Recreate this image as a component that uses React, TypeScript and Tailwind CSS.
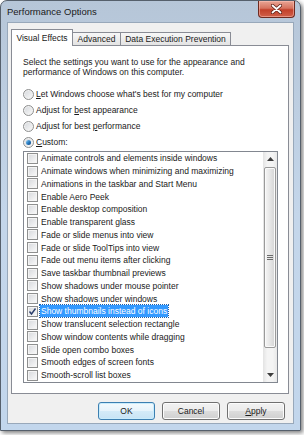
import type { FC, ReactNode } from 'react';

const effects = [
  'Animate controls and elements inside windows',
  'Animate windows when minimizing and maximizing',
  'Animations in the taskbar and Start Menu',
  'Enable Aero Peek',
  'Enable desktop composition',
  'Enable transparent glass',
  'Fade or slide menus into view',
  'Fade or slide ToolTips into view',
  'Fade out menu items after clicking',
  'Save taskbar thumbnail previews',
  'Show shadows under mouse pointer',
  'Show shadows under windows',
  'Show thumbnails instead of icons',
  'Show translucent selection rectangle',
  'Show window contents while dragging',
  'Slide open combo boxes',
  'Smooth edges of screen fonts',
  'Smooth-scroll list boxes',
];

const Radio: FC<{ checked?: boolean; children: ReactNode }> = ({ checked, children }) => (
  <div className="h-[16px] flex items-center gap-[2px]">
    <span className="w-[11px] h-[11px] rounded-full border border-[#8e8f8f] bg-linear-to-br from-[#d3d6da] to-[#fbfbfb] shadow-[inset_0_0_0_1px_#f2f2f2] flex items-center justify-center shrink-0">
      {checked && (
        <span className="w-[5px] h-[5px] rounded-full bg-linear-to-br from-[#8fd0f5] via-[#2a7fc4] to-[#0d3f7a]" />
      )}
    </span>
    <span>{children}</span>
  </div>
);

const CheckBox: FC<{ checked?: boolean }> = ({ checked }) => (
  <span className="w-[11px] h-[11px] border border-[#8e8f8f] bg-linear-to-br from-[#d6d8dc] to-[#fbfbfb] shadow-[inset_0_0_0_1px_#f4f4f4] flex items-center justify-center shrink-0">
    {checked && (
      <svg width="9" height="9" viewBox="0 0 9 9">
        <path d="M1.5 4.5 L3.5 7 L7.5 1.5" fill="none" stroke="#2b3f6c" strokeWidth="1.4" />
      </svg>
    )}
  </span>
);

const Button: FC<{ primary?: boolean; children: ReactNode }> = ({ primary, children }) => (
  <button
    className={
      primary
        ? 'w-[57px] h-[18px] rounded-[3px] border border-[#3c7fb1] bg-[linear-gradient(to_bottom,#f4fafd_0%,#e6f3fb_50%,#d4ebf8_50%,#c7e3f5_100%)] shadow-[inset_0_0_0_1px_#c9ecfc] flex items-center justify-center'
        : 'w-[58px] h-[18px] rounded-[3px] border border-[#707070] bg-[linear-gradient(to_bottom,#f2f2f2_0%,#ebebeb_50%,#dddddd_50%,#cfcfcf_100%)] shadow-[inset_0_0_0_1px_#fcfcfc] flex items-center justify-center'
    }
  >
    {children}
  </button>
);

const ScrollBar: FC = () => (
  <div className="w-[14px] flex flex-col bg-[linear-gradient(to_right,#e3e3e3,#f4f4f4_30%,#f4f4f4_70%,#e8e8e8)]">
    <div className="h-[14px] flex items-center justify-center shrink-0">
      <svg width="7" height="4" viewBox="0 0 7 4">
        <path d="M0 4 L3.5 0 L7 4 Z" fill="#3d3d3d" />
      </svg>
    </div>
    <div className="h-[181px] mt-[1px] mx-[1px] rounded-[2px] border border-[#9a9a9a] bg-linear-to-r from-[#f6f6f6] via-[#e6e6e6] to-[#d4d4d4] shadow-[inset_0_0_0_1px_#fafafa] flex items-center justify-center shrink-0">
      <svg width="6" height="5" viewBox="0 0 6 5">
        <path d="M0 0.5 H6 M0 2.5 H6 M0 4.5 H6" stroke="#6b6b6b" strokeWidth="1" />
      </svg>
    </div>
    <div className="flex-1" />
    <div className="h-[14px] flex items-center justify-center shrink-0">
      <svg width="7" height="4" viewBox="0 0 7 4">
        <path d="M0 0 L3.5 4 L7 0 Z" fill="#3d3d3d" />
      </svg>
    </div>
  </div>
);

const App: FC = () => {
  return (
    <div className="w-[304px] h-[435px] bg-white font-['Liberation_Sans',Arial,sans-serif] text-[8.5px] text-[#1a1a1a]">
      <div className="w-[301px] h-[431px] rounded-t-[7px] border border-[#56606c] bg-linear-to-b from-[#b6c6d8] via-[#c4d6ea] to-[#c2d6ec] shadow-[2px_2px_4px_rgba(0,0,0,0.5)] flex flex-col">
        {/* title bar */}
        <div className="h-[21px] flex items-start justify-between pl-[6px] pr-[5px] shrink-0">
          <span className="text-[9.5px] leading-[21px] text-[#1a1a1a]">Performance Options</span>
          <div className="w-[37px] h-[17px] rounded-b-[4px] border border-t-0 border-[#6e2a20] bg-[linear-gradient(to_bottom,#e9a595_0%,#d6735f_45%,#c2402a_55%,#d0604a_100%)] shadow-[inset_0_0_0_1px_rgba(255,200,190,0.5)] flex items-center justify-center">
            <svg width="11" height="10" viewBox="0 0 11 10">
              <path d="M1.5 1.5 L9.5 8.5 M9.5 1.5 L1.5 8.5" stroke="#5a1e16" strokeWidth="3.4" strokeLinecap="round" />
              <path d="M1.5 1.5 L9.5 8.5 M9.5 1.5 L1.5 8.5" stroke="#ffffff" strokeWidth="1.8" strokeLinecap="round" />
            </svg>
          </div>
        </div>

        {/* client area */}
        <div className="mx-[6px] h-[402px] border border-[#98a8ba] bg-[#f0f0f0] pt-[6px] pl-[3px] pr-[4px] pb-[3px] flex flex-col shrink-0">
          {/* tabs */}
          <div className="flex items-end h-[17px] -mb-px relative z-10">
            <div className="w-[62px] h-[17px] border border-b-0 border-[#898c95] bg-white flex items-center justify-center">
              Visual Effects
            </div>
            <div className="w-[48px] h-[13px] mb-px border border-b-0 border-l-0 border-[#898c95] bg-linear-to-b from-[#f7f7f7] to-[#e3e3e3] flex items-center justify-center">
              Advanced
            </div>
            <div className="w-[110px] h-[13px] mb-px border border-b-0 border-l-0 border-[#898c95] bg-linear-to-b from-[#f7f7f7] to-[#e3e3e3] flex items-center justify-center">
              Data Execution Prevention
            </div>
          </div>

          {/* tab panel */}
          <div className="h-[349px] border border-[#898c95] bg-white pt-[11px] pl-[11px] pr-[10px] flex flex-col">
            <p className="leading-[10px]">
              Select the settings you want to use for the appearance and
              <br />
              performance of Windows on this computer.
            </p>
            <div className="mt-[9px] flex flex-col">
              <Radio>
                <span className="underline">L</span>et Windows choose what's best for my computer
              </Radio>
              <Radio>
                Adjust for <span className="underline">b</span>est appearance
              </Radio>
              <Radio>
                Adjust for best <span className="underline">p</span>erformance
              </Radio>
              <Radio checked>
                <span className="underline">C</span>ustom:
              </Radio>
            </div>

            {/* effects list */}
            <div className="mt-[1px] h-[232px] border border-[#828790] bg-white flex">
              <div className="flex-1 flex flex-col">
                {effects.map((label, i) => {
                  const selected = i === 12;
                  return (
                    <div key={label} className="h-[12.75px] flex items-center pl-[3px] gap-[2px] shrink-0">
                      <CheckBox checked={selected} />
                      <span
                        className={
                          selected
                            ? 'bg-[#3399ff] text-white px-[1px] leading-[12px] outline outline-1 outline-dotted outline-[#1f5fa8]'
                            : 'px-[1px] leading-[12px]'
                        }
                      >
                        {label}
                      </span>
                    </div>
                  );
                })}
              </div>
              <ScrollBar />
            </div>
          </div>

          {/* buttons */}
          <div className="mt-[8px] flex justify-end gap-[7px] pr-[4px]">
            <Button primary>OK</Button>
            <Button>Cancel</Button>
            <Button>
              <span className="underline">A</span>pply
            </Button>
          </div>
        </div>
      </div>
    </div>
  );
};

export default App;
